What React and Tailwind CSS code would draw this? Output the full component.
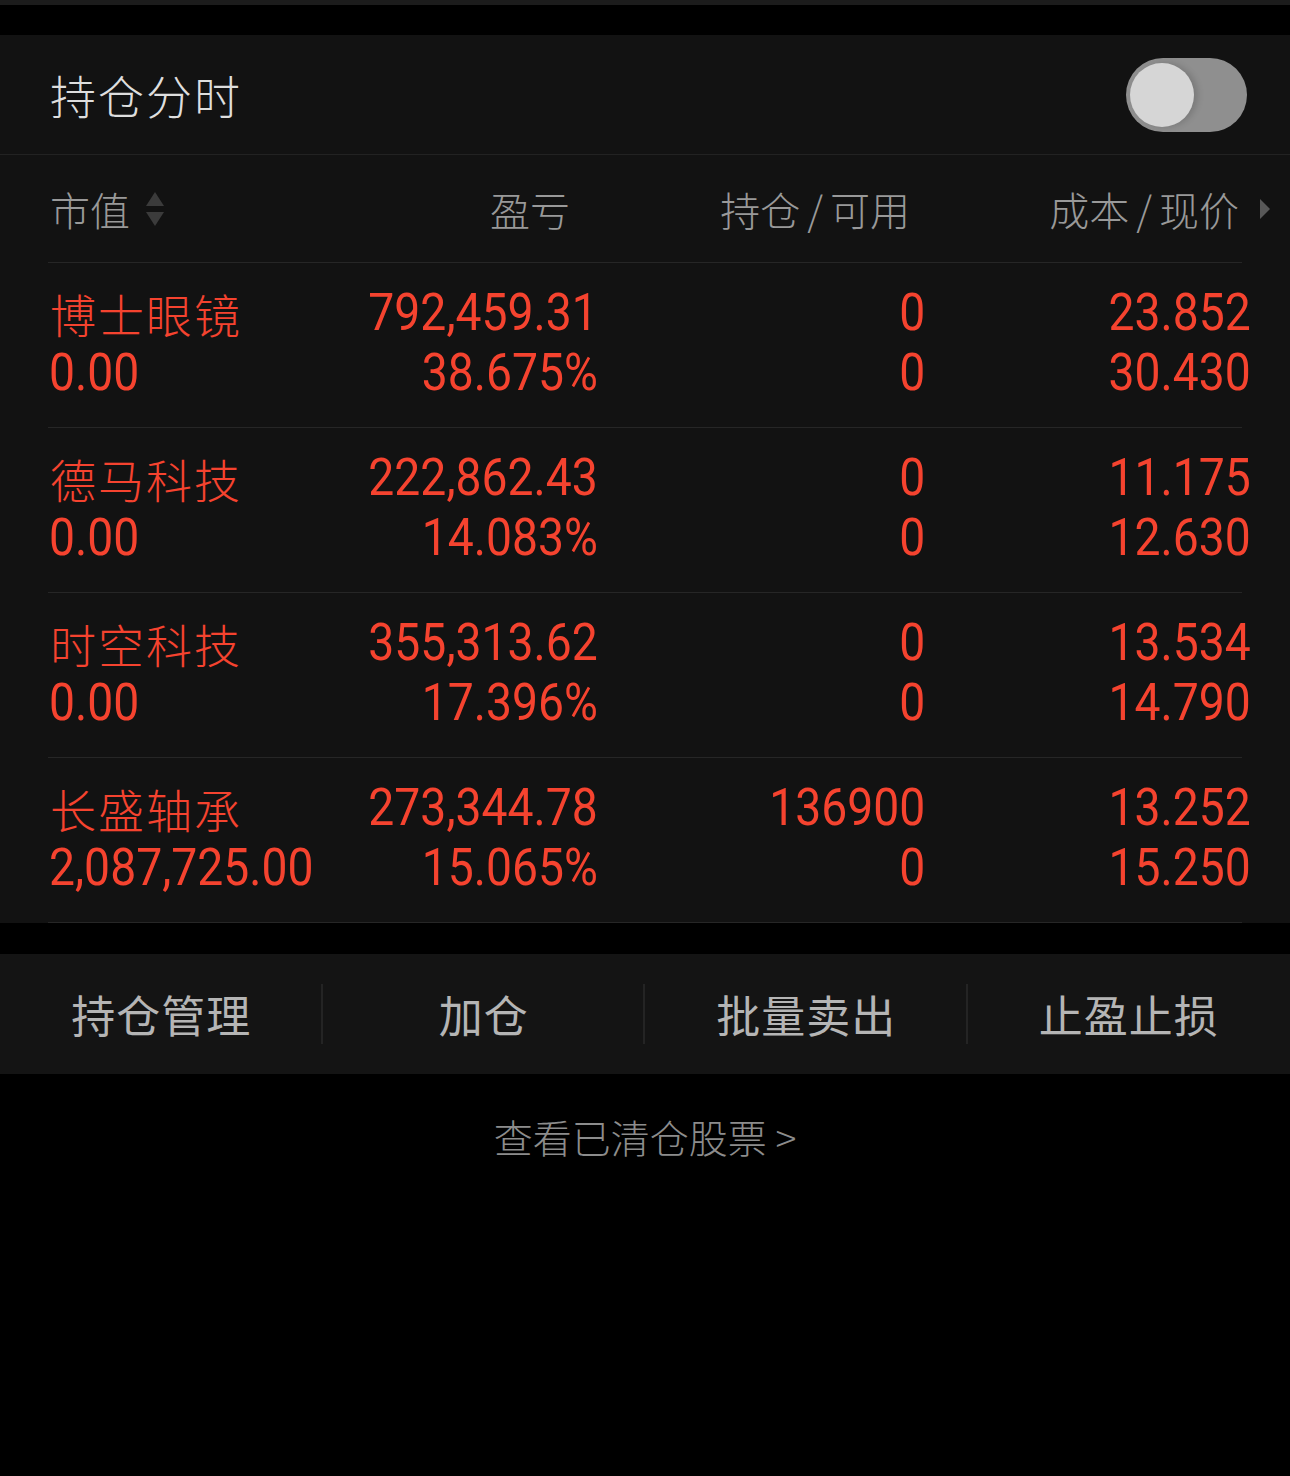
import React from 'react';

const cjk = '[font-family:"Noto_Sans_CJK_SC","Noto_Sans",sans-serif]';
const num = '[font-family:Roboto,"Liberation_Sans",sans-serif]';

const rows = [
    { name: '博士眼镜', value: '0.00', pl: '792,459.31', pct: '38.675%', hold: '0', avail: '0', cost: '23.852', price: '30.430' },
    { name: '德马科技', value: '0.00', pl: '222,862.43', pct: '14.083%', hold: '0', avail: '0', cost: '11.175', price: '12.630' },
    { name: '时空科技', value: '0.00', pl: '355,313.62', pct: '17.396%', hold: '0', avail: '0', cost: '13.534', price: '14.790' },
    { name: '长盛轴承', value: '2,087,725.00', pl: '273,344.78', pct: '15.065%', hold: '136900', avail: '0', cost: '13.252', price: '15.250' },
];

const SortIcon = () => (
    <svg width="22" height="40" viewBox="0 0 22 40" className="ml-[14px]">
        <path d="M11 3 L20 17 L2 17 Z" fill="#3b3b3b" />
        <path d="M2 23 L20 23 L11 37 Z" fill="#3b3b3b" />
    </svg>
);

// condensed digits: Roboto squeezed horizontally
const Num = ({ children, left }) => (
    <div className={`flex ${left ? 'justify-start pl-[1px]' : 'justify-end'}`}>
        <span className={`inline-block whitespace-nowrap scale-x-[0.89] ${left ? 'origin-left' : 'origin-right'}`}>
            {children}
        </span>
    </div>
);

const PositionRow = ({ row }) => (
    <div className="ml-[48px] w-[1194px] border-b border-[#262626]">
        <div className={`w-[1203px] h-[164px] grid grid-cols-[330px_220px_327px_326px] content-center pb-[4px] text-[#f5432f] ${num} font-normal text-[52px] leading-[60px]`}>
            <div className={`pl-[2px] ${cjk} font-light text-[46px] tracking-[2px]`}>{row.name}</div>
            <Num>{row.pl}</Num>
            <Num>{row.hold}</Num>
            <Num>{row.cost}</Num>
            <Num left>{row.value}</Num>
            <Num>{row.pct}</Num>
            <Num>{row.avail}</Num>
            <Num>{row.price}</Num>
        </div>
    </div>
);

const actions = ['持仓管理', '加仓', '批量卖出', '止盈止损'];

export default function App() {
    return (
        <div className={`min-h-[1476px] bg-black ${cjk} font-light`}>
            <div className="h-[5px] bg-[#1c1c1c]" />
            <div className="h-[30px]" />

            <section className="bg-[#121212]">
                <div className="h-[120px] flex items-center justify-between pl-[50px] pr-[43px] border-b border-[#222222]">
                    <span className="text-[46px] text-[#dedede] tracking-[2px]">持仓分时</span>
                    <div className="w-[121px] h-[74px] rounded-full bg-[#8f8f8f] flex items-center pl-[4px]">
                        <div className="w-[64px] h-[64px] rounded-full bg-[#d6d6d6] shadow-[4px_0_6px_rgba(0,0,0,0.15)]" />
                    </div>
                </div>

                <div className="ml-[48px] w-[1194px] border-b border-[#262626]">
                    <div className="w-[1203px] h-[107px] grid grid-cols-[330px_220px_327px_326px] items-center text-[40px] text-[#999999]">
                        <div className="pl-[2px] flex items-center">
                            <span>市值</span>
                            <SortIcon />
                        </div>
                        <div className="text-right pr-[28px]">盈亏</div>
                        <div className="text-right pr-[15px]">持仓<span className="mx-[7px]">/</span>可用</div>
                        <div className="flex items-center justify-end -mr-[20px]">
                            <span>成本<span className="mx-[7px]">/</span>现价</span>
                            <svg width="12" height="22" viewBox="0 0 12 22" className="ml-[20px]">
                                <path d="M1 1 L11 11 L1 21 Z" fill="#585858" />
                            </svg>
                        </div>
                    </div>
                </div>

                {rows.map((row) => (
                    <PositionRow key={row.name} row={row} />
                ))}
            </section>

            <div className="h-[31px]" />

            <div className="h-[120px] bg-[#141414] grid grid-cols-4 items-center">
                {actions.map((label, i) => (
                    <div key={label} className="relative flex items-center justify-center h-[60px]">
                        <span className="text-[44px] font-normal text-[#b5b5b5] tracking-[1px]">{label}</span>
                        {i < actions.length - 1 && (
                            <div className="absolute right-0 top-0 h-[60px] w-[2px] bg-[#242424]" />
                        )}
                    </div>
                ))}
            </div>

            <div className="pt-[33px] text-center text-[39px] text-[#8c8c8c]">
                查看已清仓股票 <span>&gt;</span>
            </div>
        </div>
    );
}
